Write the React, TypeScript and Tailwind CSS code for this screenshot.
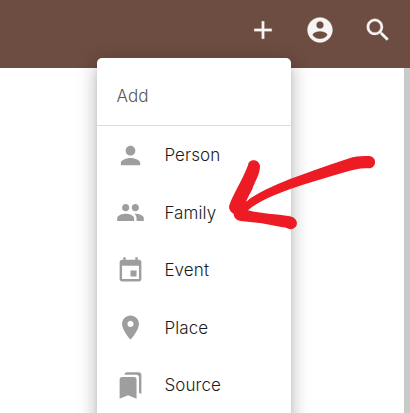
const paths = {
  add: 'M19 13h-6v6h-2v-6H5v-2h6V5h2v6h6v2z',
  account:
    'M12 2C6.48 2 2 6.48 2 12s4.48 10 10 10 10-4.48 10-10S17.52 2 12 2zm0 3c1.66 0 3 1.34 3 3s-1.34 3-3 3-3-1.34-3-3 1.34-3 3-3zm0 14.2c-2.5 0-4.71-1.28-6-3.22.03-1.99 4-3.08 6-3.08 1.99 0 5.97 1.09 6 3.08-1.29 1.94-3.5 3.22-6 3.22z',
  search:
    'M15.5 14h-.79l-.28-.27C15.41 12.59 16 11.11 16 9.5 16 5.91 13.09 3 9.5 3S3 5.91 3 9.5 5.91 16 9.5 16c1.61 0 3.09-.59 4.23-1.57l.27.28v.79l5 4.99L20.49 19l-4.99-5zm-6 0C7.01 14 5 11.99 5 9.5S7.01 5 9.5 5 14 7.01 14 9.5 11.99 14 9.5 14z',
  person:
    'M12 12c2.21 0 4-1.79 4-4s-1.79-4-4-4-4 1.79-4 4 1.79 4 4 4zm0 2c-2.67 0-8 1.34-8 4v2h16v-2c0-2.66-5.33-4-8-4z',
  family:
    'M16 11c1.66 0 2.99-1.34 2.99-3S17.66 5 16 5c-1.66 0-3 1.34-3 3s1.34 3 3 3zm-8 0c1.66 0 2.99-1.34 2.99-3S9.66 5 8 5C6.34 5 5 6.34 5 8s1.34 3 3 3zm0 2c-2.33 0-7 1.17-7 3.5V19h14v-2.5c0-2.33-4.67-3.5-7-3.5zm8 0c-.29 0-.62.02-.97.05 1.16.84 1.97 1.97 1.97 3.45V19h6v-2.5c0-2.33-4.67-3.5-7-3.5z',
  event:
    'M17 12h-5v5h5v-5zM16 1v2H8V1H6v2H5c-1.11 0-1.99.9-1.99 2L3 19c0 1.1.89 2 2 2h14c1.1 0 2-.9 2-2V5c0-1.1-.9-2-2-2h-1V1h-2zm3 18H5V8h14v11z',
  place:
    'M12 2C8.13 2 5 5.13 5 9c0 5.25 7 13 7 13s7-7.75 7-13c0-3.87-3.13-7-7-7zm0 9.5c-1.38 0-2.5-1.12-2.5-2.5s1.12-2.5 2.5-2.5 2.5 1.12 2.5 2.5-1.12 2.5-2.5 2.5z',
  source:
    'M19 18l2 1V3c0-1.1-.9-2-2-2H8.99C7.89 1 7 1.9 7 3h10c1.1 0 2 .9 2 2v13zM15 5H5c-1.1 0-2 .9-2 2v16l7-3 7 3V7c0-1.1-.9-2-2-2z',
};

type IconName = keyof typeof paths;

function Icon({ name, className }: { name: IconName; className: string }) {
  return (
    <svg viewBox="0 0 24 24" fill="currentColor" className={className} aria-hidden="true">
      <path d={paths[name]} />
    </svg>
  );
}

const actions: { icon: IconName; label: string }[] = [
  { icon: 'add', label: 'Add' },
  { icon: 'account', label: 'Account' },
  { icon: 'search', label: 'Search' },
];

const items: { icon: IconName; label: string }[] = [
  { icon: 'person', label: 'Person' },
  { icon: 'family', label: 'Family' },
  { icon: 'event', label: 'Event' },
  { icon: 'place', label: 'Place' },
  { icon: 'source', label: 'Source' },
];

export default function App() {
  return (
    <div className="relative flex h-[413px] w-[410px] flex-col overflow-hidden bg-white font-['Inter',sans-serif]">
      <header className="flex h-[68px] shrink-0 items-start justify-end gap-[27.5px] bg-[#6d4c41] pt-[14.5px] pr-[17.5px] text-[#f7f5f4]">
        {actions.map((a) => (
          <button key={a.label} aria-label={a.label}>
            <Icon name={a.icon} className="size-[30px] stroke-current stroke-[0.2]" />
          </button>
        ))}
      </header>
      <main className="flex flex-1 justify-end">
        <div className="w-[6px] bg-[#cacaca]" />
      </main>

      <div className="absolute top-[58px] left-[97px] h-[420px] w-[194px] rounded-[5px] bg-white shadow-[0_6px_6px_-3px_rgba(0,0,0,0.2),0_10px_16px_1px_rgba(0,0,0,0.14),0_4px_20px_3px_rgba(0,0,0,0.12)]">
        <div className="flex h-[68px] items-center border-b border-[#dcdcdc] pt-[11px] pl-[19.5px] text-[17px] font-light tracking-[0.1px] text-[#555555]">
          Add
        </div>
        <ul className="flex flex-col pt-[1px]">
          {items.map((item) => (
            <li key={item.label} className="flex h-[57.5px] items-center gap-[19px] pl-[19.4px]">
              <Icon name={item.icon} className="mb-px size-[29px] text-[#9e9e9e]" />
              <span className="text-[17px] font-light tracking-[0.1px] text-[#1c1c1c]">{item.label}</span>
            </li>
          ))}
        </ul>
      </div>

      <svg className="absolute top-[140px] left-[220px]" width="190" height="100" viewBox="0 0 570 300" aria-hidden="true">
        <path
          fill="#ed1c24"
          d="M84 76C86 55 116 56 120 77C121 102 104 124 97 147C90 162 83 172 78 186C108 158 163 137 210 117C278 93 342 69 398 52C416 47 430 49 447 48C472 50 471 84 447 85C420 83 399 90 379 95C324 111 268 127 211 147C169 163 116 182 84 211C123 222 168 221 210 229C237 235 237 263 215 268C203 268 201 262 188 262L125 250L62 243C47 240 41 230 41 221C31 217 25 205 28 196C39 162 64 128 84 76Z"
        />
      </svg>
    </div>
  );
}
